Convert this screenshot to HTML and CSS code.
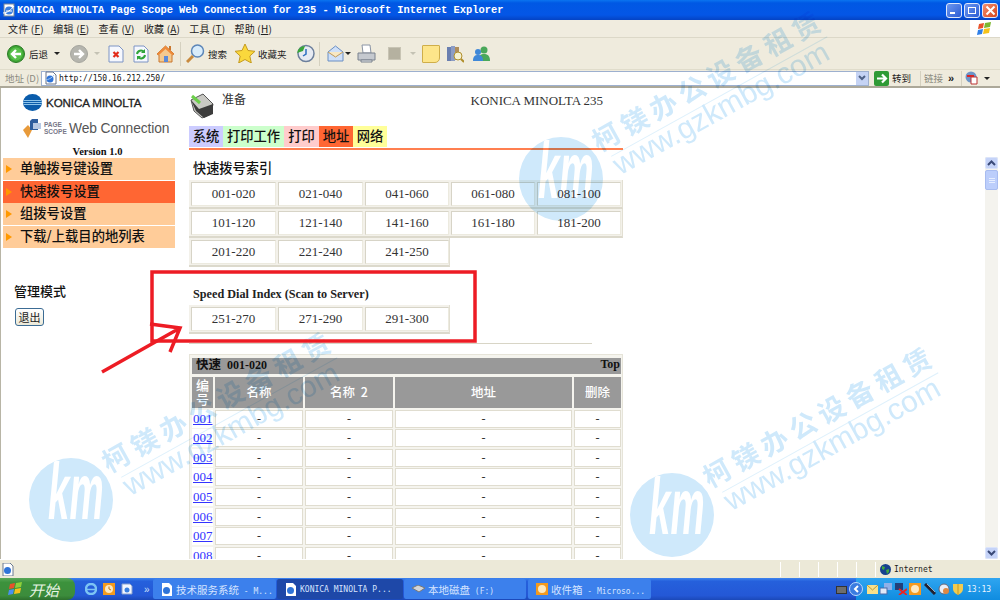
FILE: index.html
```html
<!DOCTYPE html>
<html lang="zh">
<head>
<meta charset="utf-8">
<title>KONICA MINOLTA Page Scope Web Connection for 235</title>
<link rel="stylesheet" href="styles.css">
</head>
<body>
<div class="screen">
  <header class="titlebar">
    <svg class="t-ico" width="14" height="14" viewBox="0 0 14 14"><rect x="2" y="1" width="10" height="12" fill="#fff" stroke="#789"/><circle cx="7" cy="7.500" r="4" fill="#3a7fe0"/><path d="M4 8h6M1 10c4 0 8-3 11-7" stroke="#fff" fill="none"/></svg>
    <span class="t-text">KONICA MINOLTA Page Scope Web Connection for 235 - Microsoft Internet Explorer</span>
    <span class="t-btn"><i class="t-min"></i></span>
    <span class="t-btn"><i class="t-res"></i></span>
    <span class="t-btn t-close"><svg width="11" height="11" viewBox="0 0 11 11"><path d="M1.500 1.500l8 8M9.500 1.500l-8 8" stroke="#fff" stroke-width="2"/></svg></span>
  </header>

  <nav class="menubar">
    <span class="m-item">文件 (<u>F</u>)</span>
    <span class="m-item">编辑 (<u>E</u>)</span>
    <span class="m-item">查看 (<u>V</u>)</span>
    <span class="m-item">收藏 (<u>A</u>)</span>
    <span class="m-item">工具 (<u>T</u>)</span>
    <span class="m-item">帮助 (<u>H</u>)</span>
    <span class="m-flag">
      <svg width="16" height="14" viewBox="0 0 16 14"><path d="M2 2l5-1-1 5-5 1z" fill="#e8522a"/><path d="M8 1l6-1-1 5-6 1z" fill="#7cb82f"/><path d="M1 8l5-1-1 5-5 1z" fill="#2f7fe8"/><path d="M7 7l6-1-1 5-6 1z" fill="#f5c21b"/></svg>
    </span>
  </nav>

  <div class="toolbar">
    <svg class="i-back" width="18" height="18" viewBox="0 0 18 18"><circle cx="9" cy="9" r="8.500" fill="#3fa535" stroke="#2a7a25"/><circle cx="9" cy="9" r="6.500" fill="#58c04a"/><path d="M14 9H6M9 5L5 9l4 4" stroke="#fff" stroke-width="2.400" fill="none"/></svg>
    <span class="tb-label l-back">后退</span>
    <i class="caret c-back"></i>
    <svg class="i-fwd" width="18" height="18" viewBox="0 0 18 18"><circle cx="9" cy="9" r="8.500" fill="#b5b5ae" stroke="#a5a59e"/><path d="M4 9h8M9 5l4 4-4 4" stroke="#fff" stroke-width="2.400" fill="none"/></svg>
    <i class="caret pale c-fwd"></i>
    <svg class="i-stop" width="16" height="18" viewBox="0 0 16 18"><path d="M1 1h10l4 4v12H1z" fill="#f6f8fe" stroke="#7d94c4"/><path d="M5.500 7l5 5M10.500 7l-5 5" stroke="#e22a1a" stroke-width="2.200"/></svg>
    <svg class="i-ref" width="16" height="18" viewBox="0 0 16 18"><path d="M1 1h10l4 4v12H1z" fill="#f6f8fe" stroke="#7d94c4"/><path d="M4 9a4 4 0 0 1 7-2M12 10a4 4 0 0 1-7 2" stroke="#2fa53a" stroke-width="2" fill="none"/><path d="M12 4v4H8M4 15v-4h4" fill="#2fa53a"/></svg>
    <svg class="i-home" width="19" height="19" viewBox="0 0 19 19"><path d="M1 10l8.500-8 8.500 8-2 1v7H3v-7z" fill="#f4c98f" stroke="#c9772e"/><path d="M1 10l8.500-8 8.500 8-2 1-6.500-6-6.500 6z" fill="#ee8a3a"/><rect x="8" y="12" width="4" height="6" fill="#5b8ad8"/><rect x="13" y="2" width="2" height="4" fill="#c9772e"/></svg>
    <i class="tb-sep s-1"></i>
    <svg class="i-search" width="19" height="19" viewBox="0 0 19 19"><circle cx="11.500" cy="7" r="6" fill="#d8ecfb" stroke="#5c86b8" stroke-width="1.500"/><path d="M7 12l-6 6" stroke="#c88a3e" stroke-width="3"/></svg>
    <span class="tb-label l-search">搜索</span>
    <svg class="i-star" width="20" height="19" viewBox="0 0 20 19"><path d="M10 0l3 6.500 7 .8-5.200 4.700 1.500 7L10 15.500 3.700 19l1.500-7L0 7.300l7-.8z" fill="#fad83c" stroke="#c59a20"/></svg>
    <span class="tb-label l-fav">收藏夹</span>
    <svg class="i-hist" width="19" height="19" viewBox="0 0 19 19"><circle cx="10" cy="9.500" r="8" fill="#e6eaf2" stroke="#6c7f9c" stroke-width="1.500"/><path d="M10 5v5l-3 2" stroke="#2d6fc0" stroke-width="1.500" fill="none"/><path d="M1 9a8 8 0 0 1 8-7l-2 5z" fill="#39a53a"/></svg>
    <i class="tb-sep s-2"></i>
    <svg class="i-mail" width="17" height="17" viewBox="0 0 17 17"><path d="M1 7l7.500-6L16 7v9H1z" fill="#cfe0f8" stroke="#6a8fc4"/><path d="M1 7l7.500 5L16 7" fill="#f8e8c4" stroke="#c09a5a"/></svg>
    <i class="caret c-mail"></i>
    <svg class="i-print" width="19" height="19" viewBox="0 0 19 19"><path d="M5 1h8l1 8H6z" fill="#fff" stroke="#8a94a4"/><path d="M1 9h17v7H1z" fill="#c5c9cf" stroke="#7a828e"/><path d="M4 16h11v2H4z" fill="#e6e8ea" stroke="#7a828e"/></svg>
    <i class="tb-grey"></i>
    <i class="caret pale c-grey"></i>
    <i class="tb-note"></i>
    <svg class="i-book" width="18" height="18" viewBox="0 0 18 18"><rect x="1" y="2" width="4" height="14" fill="#6a7fb0"/><rect x="5" y="1" width="4" height="15" fill="#8c9cc4"/><rect x="9" y="2" width="4" height="13" fill="#b08e5a"/><circle cx="12" cy="11" r="4" fill="#f4f0d0" stroke="#b08e2a"/><path d="M15 14l3 3" stroke="#b08e2a" stroke-width="2"/></svg>
    <svg class="i-msn" width="18" height="16" viewBox="0 0 18 16"><circle cx="11" cy="4" r="3.500" fill="#4aa85a"/><path d="M5 15c0-6 3-7 6-7s6 1 6 7z" fill="#4aa85a"/><circle cx="5" cy="6" r="3" fill="#3f88d8"/><path d="M0 15c0-5 2-6 5-6s5 1 5 6z" fill="#3f88d8"/></svg>
  </div>

  <div class="addrbar">
    <span class="a-label">地址 (D)</span>
    <div class="a-field">
      <svg width="13" height="14" viewBox="0 0 13 14"><path d="M2 1h7l3 3v9H2z" fill="#fff" stroke="#68748a"/><circle cx="6" cy="8" r="3.500" fill="#2f74d8"/><path d="M1 9c3 0 7-2 9-5" stroke="#9cc4f0" fill="none"/></svg>
      <span class="a-url">http://150.16.212.250/</span>
      <span class="a-drop"><svg width="8" height="6" viewBox="0 0 8 6"><path d="M1 1l3 3 3-3" stroke="#4d6185" stroke-width="2" fill="none"/></svg></span>
    </div>
    <svg class="a-go" width="15" height="15" viewBox="0 0 15 15"><rect width="15" height="15" rx="2" fill="#2f9a35"/><path d="M3 7.500h8M8 3.500l4 4-4 4" stroke="#fff" stroke-width="2.200" fill="none"/></svg>
    <span class="a-gotxt">转到</span>
    <i class="a-sep"></i>
    <span class="a-links">链接</span>
    <span class="a-more">»</span>
    <i class="a-sep a-sep2"></i>
    <svg width="13" height="14" viewBox="0 0 13 14"><circle cx="6" cy="6" r="5.500" fill="#6c94c8"/><rect x="2" y="4" width="7" height="2" fill="#d22"/><path d="M6 6h6v7H6z" fill="#fff" stroke="#b33"/></svg>
    <i class="caret c-pdf"></i>
  </div>

  <main class="content">
    <aside class="leftnav">
      <div class="logo-row">
        <svg width="19" height="17" viewBox="0 0 19 17"><ellipse cx="9.500" cy="8.500" rx="9.500" ry="8.500" fill="#0a5cab"/><path d="M1 6.500h17M0 8.500h19M1 10.500h17" stroke="#8cc4ea"/></svg>
        <span class="logo-km">KONICA MINOLTA</span>
      </div>
      <div class="ps-row">
        <svg width="19" height="19" viewBox="0 0 19 19"><path d="M0 11l5-5 4 5-4 8z" fill="#e89a3a"/><path d="M9 0h6v11H7V2z" fill="#2d5d9e"/><path d="M10 4h8v6h-8z" fill="#b6c8e4"/></svg>
        <span class="ps-mark">PAGE<br>SCOPE</span>
        <span class="ps-web">Web Connection</span>
      </div>
      <div class="version">Version 1.0</div>
      <ul class="side-menu">
        <li class="side-item">单触拨号键设置</li>
        <li class="side-item on">快速拨号设置</li>
        <li class="side-item">组拨号设置</li>
        <li class="side-item">下载/上载目的地列表</li>
      </ul>
      <div class="admin-title">管理模式</div>
      <button class="logout" type="button">退出</button>
    </aside>

    <section class="frame">
      <div class="status-row">
        <svg class="printer" width="24" height="26" viewBox="0 0 24 26"><path d="M1 7l12-6 10 10-2 10-9 4-8-7z" fill="#c9c9c4" stroke="#555"/><path d="M1 7l8 9 14-5v10l-9 4-8-7z" fill="#3c3c3c"/><path d="M2 3l8 7" stroke="#6ccf4a" stroke-width="3"/></svg>
        <span class="ready">准备</span>
        <span class="model">KONICA MINOLTA 235</span>
      </div>
      <div class="tabs">
        <span class="tab t-sys">系统</span>
        <span class="tab t-job">打印工作</span>
        <span class="tab t-prn">打印</span>
        <span class="tab t-adr">地址</span>
        <span class="tab t-net">网络</span>
      </div>
      <h2 class="idx-head">快速拨号索引</h2>
      <div class="idx-row"><a class="cell w85">001-020</a><a class="cell w85">021-040</a><a class="cell">041-060</a><a class="cell">061-080</a><a class="cell">081-100</a></div>
      <div class="idx-row"><a class="cell w85">101-120</a><a class="cell w85">121-140</a><a class="cell">141-160</a><a class="cell">161-180</a><a class="cell">181-200</a></div>
      <div class="idx-row short"><a class="cell w85">201-220</a><a class="cell w85">221-240</a><a class="cell">241-250</a></div>
      <h3 class="scan-head">Speed Dial Index (Scan to Server)</h3>
      <div class="idx-row short"><a class="cell w85">251-270</a><a class="cell w85">271-290</a><a class="cell">291-300</a></div>
      <hr class="rule">
      <div class="dial">
        <div class="dial-title"><span class="dt-l"><b>快速</b>&nbsp; 001-020</span><span class="dt-r">Top</span></div>
        <div class="th narrow">编号</div><div class="th">名称</div><div class="th">名称 &nbsp;2</div><div class="th">地址</div><div class="th">删除</div>
        <a class="td num">001</a><div class="td">-</div><div class="td">-</div><div class="td">-</div><div class="td">-</div>
        <a class="td num">002</a><div class="td">-</div><div class="td">-</div><div class="td">-</div><div class="td">-</div>
        <a class="td num">003</a><div class="td">-</div><div class="td">-</div><div class="td">-</div><div class="td">-</div>
        <a class="td num">004</a><div class="td">-</div><div class="td">-</div><div class="td">-</div><div class="td">-</div>
        <a class="td num">005</a><div class="td">-</div><div class="td">-</div><div class="td">-</div><div class="td">-</div>
        <a class="td num">006</a><div class="td">-</div><div class="td">-</div><div class="td">-</div><div class="td">-</div>
        <a class="td num">007</a><div class="td">-</div><div class="td">-</div><div class="td">-</div><div class="td">-</div>
        <a class="td num">008</a><div class="td">-</div><div class="td">-</div><div class="td">-</div><div class="td">-</div>
      </div>
    </section>

    <div class="scrollbar">
      <span class="sb-btn"><svg width="9" height="6" viewBox="0 0 9 6"><path d="M1 5l3.500-3.500L8 5" stroke="#3a4a78" stroke-width="2" fill="none"/></svg></span>
      <span class="sb-thumb"><i></i><i></i><i></i></span>
      <span class="sb-track"></span>
      <span class="sb-btn"><svg width="9" height="6" viewBox="0 0 9 6"><path d="M1 1l3.500 3.500L8 1" stroke="#3a4a78" stroke-width="2" fill="none"/></svg></span>
    </div>
  </main>

  <footer class="statusbar">
    <svg class="st-ie" width="12" height="13" viewBox="0 0 12 13"><path d="M1 0h7l3 3v10H1z" fill="#fff" stroke="#6a7a92"/><circle cx="5.500" cy="7.500" r="3.500" fill="#2f74d8"/></svg>
    <i class="st-sep first"></i><i class="st-sep"></i><i class="st-sep"></i><i class="st-sep"></i><i class="st-sep"></i><i class="st-sep"></i>
    <svg class="st-globe" width="11" height="11" viewBox="0 0 11 11"><circle cx="5.500" cy="5.500" r="5.500" fill="#17418e"/><path d="M2 2l3 1-1 3-2-1zM6 6l3-1 0 3-2 2z" fill="#3fa83f"/></svg>
    <span class="st-net">Internet</span>
  </footer>

  <div class="taskbar">
    <div class="start">
      <svg width="15" height="14" viewBox="0 0 15 14"><path d="M2 2l5-1-1 5-5 1z" fill="#e8522a"/><path d="M8 1l6-1-1 5-6 1z" fill="#8fd03a"/><path d="M1 8l5-1-1 5-5 1z" fill="#4a90f0"/><path d="M7 7l6-1-1 5-6 1z" fill="#f5c21b"/></svg>
      <span class="start-txt">开始</span>
    </div>
    <div class="quick">
      <svg width="12" height="12" viewBox="0 0 12 12"><circle cx="6" cy="6" r="5" fill="none" stroke="#7cc4f4" stroke-width="2.500"/><path d="M1 6.500h10" stroke="#7cc4f4" stroke-width="1.500"/></svg>
      <svg width="12" height="12" viewBox="0 0 12 12"><rect width="12" height="12" fill="#f49a1e"/><circle cx="6" cy="6" r="4" fill="#fce8c0"/><path d="M6 3.500V6l2 1" stroke="#c07010" fill="none"/></svg>
      <svg width="12" height="12" viewBox="0 0 12 12"><path d="M1 1h8l2 2v8H1z" fill="#f2f6ff" stroke="#8aa0cc"/><circle cx="6" cy="7" r="2.500" fill="#3a7fe0"/></svg>
    </div>
    <span class="q-more">»</span>
    <div class="task w123"><svg width="12" height="13" viewBox="0 0 12 13"><path d="M1 0h7l3 3v10H1z" fill="#fff"/><circle cx="5.500" cy="7.500" r="3.500" fill="#2f74d8"/></svg><span><span class="zh">技术服务系统</span> - M...</span></div>
    <div class="task w126 active"><svg width="12" height="13" viewBox="0 0 12 13"><path d="M1 0h7l3 3v10H1z" fill="#fff"/><circle cx="5.500" cy="7.500" r="3.500" fill="#2f74d8"/></svg><span>KONICA MINOLTA P...</span></div>
    <div class="task w122"><svg width="13" height="8" viewBox="0 0 13 8"><path d="M0 3l6-3 7 3-6 4z" fill="#d2d4d8" stroke="#777"/></svg><span><span class="zh">本地磁盘</span> (F:)</span></div>
    <div class="task w123"><svg width="12" height="12" viewBox="0 0 12 12"><rect width="12" height="12" fill="#f49a1e"/><circle cx="6" cy="6" r="4" fill="#fce8c0"/></svg><span><span class="zh">收件箱</span> - Microso...</span></div>
    <div class="tray-gap"><svg width="11" height="10" viewBox="0 0 11 10"><rect y="2" width="11" height="8" fill="#333"/><path d="M1 4h9M1 6h9M1 8h9" stroke="#ddd" stroke-width=".7"/></svg></div>
    <div class="tray">
      <span class="tray-back"><svg width="6" height="8" viewBox="0 0 6 8"><path d="M5 1L2 4l3 3" stroke="#fff" stroke-width="2" fill="none"/></svg></span>
      <svg width="11" height="9" viewBox="0 0 11 9"><rect width="11" height="9" fill="#f8e08a"/><path d="M0 0l5.500 5L11 0" stroke="#b89a3a" fill="none"/></svg>
      <svg width="12" height="12" viewBox="0 0 12 12"><rect x="4" width="8" height="7" fill="#8fb0e8"/><rect y="5" width="7" height="6" fill="#dfe8f8" stroke="#4a6aa8"/></svg>
      <svg width="12" height="12" viewBox="0 0 12 12"><rect width="8" height="7" fill="#22407a"/><path d="M4 6l8 6M12 6l-8 6" stroke="#e22" stroke-width="1.800"/></svg>
      <svg width="12" height="12" viewBox="0 0 12 12"><rect width="12" height="12" fill="#f49a1e"/><circle cx="6" cy="6" r="4" fill="#fce8c0"/></svg>
      <svg width="12" height="12" viewBox="0 0 12 12"><path d="M1 1l10 10" stroke="#223" stroke-width="3"/><path d="M3 1l8 8" stroke="#9ab" stroke-width="1"/></svg>
      <svg width="12" height="12" viewBox="0 0 12 12"><circle cx="6" cy="6" r="5" fill="#e8eef8" stroke="#667"/><circle cx="8" cy="8" r="3" fill="#d84"/></svg>
      <svg width="10" height="12" viewBox="0 0 10 12"><path d="M0 1h10v5c0 3-3 5-5 6-2-1-5-3-5-6z" fill="#f2cb50"/><path d="M5 1v11" stroke="#c89a20"/></svg>
      <span class="clock">13:13</span>
    </div>
  </div>

  <div class="wm wm-a"><div class="wm-disc"><span>km</span></div><div class="wm-cn">柯镁办公设备租赁</div><i class="wm-line"></i><div class="wm-en">www.gzkmbg.com</div></div>
  <div class="wm wm-b"><div class="wm-disc"><span>km</span></div><div class="wm-cn">柯镁办公设备租赁</div><i class="wm-line"></i><div class="wm-en">www.gzkmbg.com</div></div>
  <div class="wm wm-c"><div class="wm-disc"><span>km</span></div><div class="wm-cn">柯镁办公设备租赁</div><i class="wm-line"></i><div class="wm-en">www.gzkmbg.com</div></div>

  <svg class="annot" width="1000" height="600" viewBox="0 0 1000 600">
    <rect x="152" y="272" width="323" height="69" fill="none" stroke="#ed1c24" stroke-width="3.500"/>
    <path d="M102 372L180 328M150 324L180 328L170 352" fill="none" stroke="#ed1c24" stroke-width="3.500"/>
  </svg>
</div>
</body>
</html>
```

FILE: styles.css
```css
* { box-sizing: border-box; }
html, body { margin: 0; padding: 0; }
body { font-family: "Noto Sans CJK SC", "Liberation Sans", sans-serif; }
i { display: block; }
ul { list-style: none; margin: 0; padding: 0; }
h2, h3 { margin: 0; }

.screen { position: relative; width: 1000px; height: 600px; overflow: hidden; display: flex; flex-direction: column; background: #ece9d8; }

/* title bar */
.titlebar { height: 20px; flex: none; display: flex; align-items: center; padding: 0 2px 0 2px; gap: 1px; background: linear-gradient(#0a74f0 0, #0058e4 15%, #0456e6 75%, #0443c4 100%); }
.t-text { flex: 1; margin-left: 0; color: #fff; font: bold 10.4px "Liberation Mono", monospace; white-space: nowrap; }
.t-btn { width: 16px; height: 15px; margin-left: 1px; border: 1px solid #dfe8fb; border-radius: 3px; background: linear-gradient(135deg, #6c98f0, #2c5cd4); display: flex; align-items: center; justify-content: center; }
.t-close { background: linear-gradient(135deg, #f09070, #d8441c); }
.t-min { width: 5px; height: 2px; background: #fff; margin: 6px 4px 0 0; }
.t-res { width: 8px; height: 7px; border: 1px solid #fff; }

/* menu bar */
.menubar { height: 18px; flex: none; display: flex; align-items: center; padding-left: 8px; background: #f0ecdf; border-bottom: 1px solid #dcd8c8; font-size: 10px; letter-spacing: .2px; color: #222; }
.m-item { width: 45.300px; white-space: nowrap; }
.m-flag { margin-left: auto; width: 30px; height: 17px; background: #fff; display: flex; align-items: center; justify-content: center; }

/* tool bar */
.toolbar { height: 32px; flex: none; display: flex; align-items: center; background: #efebdd; border-bottom: 1px solid #e0dccb; }
.tb-label { font-size: 9.500px; color: #222; white-space: nowrap; }
.caret { width: 0; height: 0; border: 3px solid transparent; border-top: 3px solid #222; border-bottom: 0; }
.caret.pale { border-top-color: #c4c2b4; }
.tb-sep { width: 1px; height: 24px; background: #d5d1c0; }
.i-back { margin-left: 7px; }
.l-back { margin-left: 4px; }
.c-back { margin-left: 6px; }
.i-fwd { margin-left: 10px; }
.c-fwd { margin-left: 6px; }
.i-stop { margin-left: 8px; }
.i-ref { margin-left: 9px; }
.i-home { margin-left: 7px; }
.s-1 { margin-left: 5px; }
.i-search { margin-left: 5px; }
.l-search { margin-left: 3px; }
.i-star { margin-left: 8px; }
.l-fav { margin-left: 3px; }
.i-hist { margin-left: 9px; }
.s-2 { margin-left: 4px; }
.i-mail { margin-left: 7px; }
.c-mail { margin-left: 1px; }
.i-print { margin-left: 6px; }
.tb-grey { width: 13px; height: 13px; margin-left: 12px; background: #b5b1a0; border: 1px solid #c8c4b4; }
.c-grey { margin-left: 9px; }
.tb-note { width: 18px; height: 18px; margin-left: 6px; background: #fde58a; border: 1px solid #cfae4a; border-radius: 1px 1px 5px 1px; }
.i-book { margin-left: 6px; }
.i-msn { margin-left: 9px; }

/* address bar */
.addrbar { height: 18px; flex: none; display: flex; align-items: center; background: #efebdd; border-bottom: 2px solid #aca899; font-size: 9.500px; color: #222; }
.a-label { width: 41px; flex: none; padding-left: 5px; color: #8b8a80; white-space: nowrap; font-size: 9.500px; }
.a-field { width: 828px; height: 15px; flex: none; background: #fff; border: 1px solid #9db0cf; display: flex; align-items: center; padding-left: 2px; }
.a-url { flex: 1; margin-left: 2px; font: 8px "DejaVu Sans Mono", monospace; color: #111; }
.a-drop { width: 12px; height: 13px; background: #c5d3f4; display: flex; align-items: center; justify-content: center; }
.a-go { margin-left: 5px; flex: none; }
.a-gotxt { margin-left: 3px; width: 28px; flex: none; }
.a-sep { width: 1px; height: 15px; flex: none; background: #d5d1c0; }
.a-links { margin-left: 3px; width: 24px; flex: none; color: #8b8a80; }
.a-more { width: 13px; flex: none; font: bold 11px "Liberation Sans", sans-serif; }
.a-sep2 { margin-right: 3px; }
.c-pdf { margin-left: 6px; }

/* content */
.content { flex: 1; min-height: 0; display: grid; grid-template-columns: 177px 807px 15px; background: #fff; border-left: 1px solid #b8b5a6; }
.leftnav { padding: 6px 0 0 2px; display: flex; flex-direction: column; overflow: hidden; }
.logo-row { margin-left: 20px; display: flex; align-items: center; gap: 4px; height: 17px; }
.logo-km { font: 11.600px "Liberation Sans", sans-serif; color: #222; letter-spacing: -.1px; white-space: nowrap; -webkit-text-stroke: .3px #222; }
.ps-row { margin: 8px 0 0 20px; height: 19px; display: flex; align-items: center; }
.ps-mark { margin-left: 2px; font: bold 6.500px/6.500px "Liberation Sans", sans-serif; color: #778; width: 26px; flex: none; }
.ps-web { margin-left: -1px; font: 13.800px "Liberation Sans", sans-serif; letter-spacing: -.1px; color: #555; white-space: nowrap; }
.version { margin-top: 8px; height: 12px; padding-left: 14px; text-align: center; font: bold 10.500px/12px "Liberation Serif", serif; color: #111; }
.side-menu { display: flex; flex-direction: column; gap: .7px; }
.side-item { position: relative; width: 172px; height: 22px; padding-left: 17px; background: #ffcc99; font-size: 13.300px; font-weight: 500; line-height: 20px; color: #111; white-space: nowrap; }
.side-item::before { content: ""; position: absolute; left: 3px; top: 7px; border-left: 6px solid #ff9900; border-top: 4px solid transparent; border-bottom: 4px solid transparent; }
.side-item.on { background: #ff6633; }
.admin-title { margin: 33px 0 0 11px; font-size: 13px; line-height: 19px; color: #111; font-weight: 500; }
.logout { margin: 8px 0 0 12px; width: 29px; height: 18px; padding: 0; border: 1px solid #3c6c94; border-radius: 3px; background: linear-gradient(#fff, #ece9d8); font: 11px "Noto Sans CJK SC", sans-serif; color: #222; }

.frame { padding: 2px 0 0 11px; overflow: hidden; min-width: 0; }
.status-row { height: 36px; width: 414px; display: flex; align-items: flex-start; padding-top: 3px; }
.printer { margin-left: 1px; }
.ready { margin-left: 8px; margin-top: -3px; font-size: 12px; line-height: 18px; color: #333; }
.model { margin-left: auto; margin-top: 0; font: 13px/16px "Liberation Serif", serif; letter-spacing: -.02px; color: #333; white-space: nowrap; }
.tabs { display: flex; width: 434px; height: 24px; padding-bottom: 3px; border-bottom: 2px solid #ff7f50; }
.tab { width: 34px; height: 21px; text-align: center; font-size: 13.300px; font-weight: 500; line-height: 19px; color: #111; white-space: nowrap; }
.t-sys { background: #ccccff; }
.t-job { background: #ccffcc; width: 61px; }
.t-prn { background: #ffcccc; width: 35px; }
.t-adr { background: #ff6633; }
.t-net { background: #ffff99; }
.idx-head { height: 30px; padding: 9px 0 0 4px; font-size: 13.200px; line-height: 17px; color: #111; font-weight: 500; }
.idx-row { width: 434px; height: 29px; display: flex; gap: 2px; padding: 2px; background: #f3f1ea; border-right: 1px solid #e2dfd2; border-bottom: 2px solid #dcd9cc; }
.idx-row.short { width: 261px; }
.cell { width: 84px; height: 24px; flex: none; background: #fff; border: 1px solid #d7d4c7; border-right-color: #eceadf; border-bottom-color: #eceadf; text-align: center; font: 13px/22px "Liberation Serif", serif; color: #333; }
.w85 { width: 85px; }
.scan-head { height: 38px; padding: 20px 0 0 4px; font: bold 12.200px/15px "Liberation Serif", serif; color: #222; white-space: nowrap; }
.rule { width: 403px; height: 1px; margin: 9px 0 10px; border: 0; background: #d8d5c6; }
.dial { width: 434px; display: grid; grid-template-columns: 21px 88px 88px 177px 47px; gap: 1.600px 2px; padding: 3px 2px 0 2px; background: #f5f4ee; border: 1px solid #e6e4d9; border-width: 1px 1px 0 1px; }
.dial-title { grid-column: 1 / -1; height: 16px; margin-bottom: 1.500px; padding: 0 1px 3px 4px; background: #999; display: flex; justify-content: space-between; align-items: center; font: bold 12px/13px "Liberation Serif", serif; color: #111; white-space: nowrap; }
.dt-l b { font: bold 12.500px/13px "Noto Sans CJK SC", sans-serif; }
.th { height: 31px; padding-bottom: 3px; background: #999; display: flex; align-items: center; justify-content: center; color: #fff; font-size: 12.500px; font-weight: 500; white-space: nowrap; }
.th.narrow { white-space: normal; width: 21px; padding: 0 3px 1px; font-size: 13px; line-height: 14px; text-align: center; }
.td { height: 18px; background: #fff; border: 1px solid #e0ddd0; text-align: center; font: 12px/16px "Liberation Serif", serif; color: #333; }
.td.num { border: 0; background: #fff; color: #3333ff; text-decoration: underline; font-size: 13px; line-height: 18px; text-align: left; padding-left: 1px; }

.scrollbar { margin-top: 69px; margin-right: 2px; display: flex; flex-direction: column; background: #f4f3ee; }
.sb-btn { height: 12px; flex: none; background: #c5d3f8; border: 1px solid #dbe4fb; border-radius: 2px; display: flex; align-items: center; justify-content: center; }
.sb-thumb { margin-top: 1px; height: 20px; flex: none; background: #bccefb; border: 1px solid #a8bcf0; border-radius: 2px; display: flex; flex-direction: column; align-items: center; justify-content: center; gap: 1px; }
.sb-thumb i { width: 6px; height: 1px; background: #e6eeff; }
.sb-track { flex: 1; }

/* status bar */
.statusbar { height: 19px; flex: none; display: flex; align-items: center; padding-left: 2px; background: #ece9d8; border-top: 1px solid #fff; }
.st-sep { width: 1px; height: 15px; margin-left: 18px; background: #d5d1c0; border-right: 1px solid #fff; }
.st-sep.first { margin-left: 766px; }
.st-globe { margin-left: 4px; }
.st-net { margin-left: 3px; font: 8px "DejaVu Sans Mono", monospace; color: #222; }

/* task bar */
.taskbar { height: 22px; flex: none; display: flex; align-items: center; background: linear-gradient(#3d84ee 0, #2560dc 15%, #2458d6 80%, #1b48b8 100%); }
.start { width: 75px; height: 22px; padding-left: 8px; display: flex; align-items: center; gap: 6px; border-radius: 0 8px 8px 0; background: linear-gradient(#58a858 0, #3c923c 20%, #3c8c3c 80%, #2d702d 100%); }
.start-txt { color: #e8f4e4; font-size: 15px; font-style: italic; }
.quick { margin-left: 10px; display: flex; gap: 6px; }
.q-more { margin-left: 11px; width: 9px; color: #cfe0fb; font: 10px "Liberation Sans", sans-serif; }
.task { height: 20px; margin-right: 1px; padding-left: 8px; display: flex; align-items: center; gap: 3px; background: #3c80ec; border-radius: 2px; color: #d6e4ff; font: 8px "DejaVu Sans Mono", monospace; white-space: nowrap; }
.zh { font: 10.500px "Noto Sans CJK SC", sans-serif; }
.task.active { background: #1e48a8; }
.w123 { width: 123px; }
.w126 { width: 126px; }
.w122 { width: 122px; margin-right: 2px; }
.tray-gap { flex: 1; display: flex; justify-content: flex-end; padding-right: 9px; }
.tray { width: 144px; height: 22px; display: flex; align-items: center; gap: 2.500px; background: linear-gradient(#2fa5f0, #0f8ce0); }
.tray-back { width: 14px; height: 14px; margin-left: -7px; margin-right: 1px; border-radius: 50%; background: #3a7ce0; border: 1px solid #bcd8fa; display: flex; align-items: center; justify-content: center; }
.clock { margin-left: 2px; color: #e8f4ff; font: 8px "DejaVu Sans Mono", monospace; }

/* watermark overlays */
.wm { position: absolute; width: 84px; height: 84px; mix-blend-mode: multiply; pointer-events: none; }
.wm-a { left: 519px; top: 137px; }
.wm-b { left: 29px; top: 458px; }
.wm-c { left: 630px; top: 473px; }
.wm-disc { width: 84px; height: 84px; padding-left: 4px; border-radius: 50%; background: #cfe9fb; color: #fff; text-align: left; overflow: hidden; white-space: nowrap; font: italic bold 80px/68px "Liberation Sans", sans-serif; }
.wm-disc span { display: inline-block; margin-left: -15px; transform: scaleX(.48); }
.wm-cn, .wm-en, .wm-line { position: absolute; transform: rotate(-29deg); transform-origin: 0 0; white-space: nowrap; color: #cfe9fb; }
.wm-cn { left: 67px; top: -8px; font-size: 27px; line-height: 32px; font-weight: 700; letter-spacing: 5.700px; }
.wm-line { left: 92px; top: 19px; width: 247px; height: 1px; background: #dff1fc; }
.wm-en { left: 88px; top: 15px; font: 30px/34px "Liberation Sans", sans-serif; }

.annot { position: absolute; left: 0; top: 0; pointer-events: none; }
```
